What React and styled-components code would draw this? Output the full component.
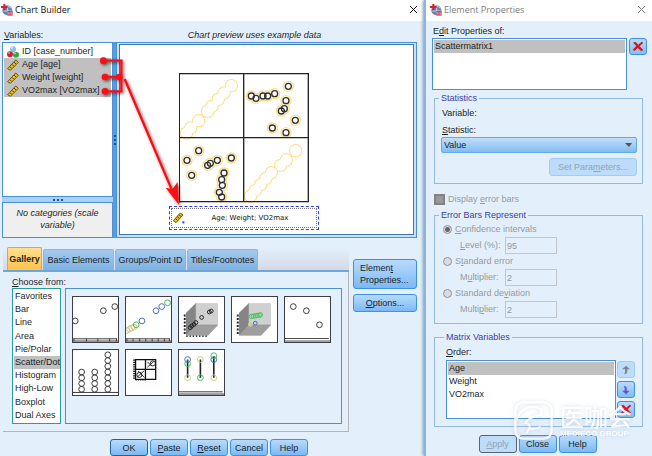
import React from "react";
import styled, { createGlobalStyle, css } from "styled-components";

const GlobalStyle = createGlobalStyle`
  *, *::before, *::after { box-sizing: border-box; }
  body {
    margin: 0;
    background: #e3effb;
    color: #1c1f26;
    font-family: "Liberation Sans", Arial, sans-serif;
    font-size: 9px;
    line-height: 13px;
  }
  button, input, select { font: inherit; color: inherit; margin: 0; }
  ul { list-style: none; margin: 0; padding: 0; }
  svg { flex: none; }
`;

const Desktop = styled.main`
  display: grid;
  grid-template-columns: minmax(0, 106fr) minmax(0, 57fr);
  min-height: 100vh;
  overflow: hidden;
`;

const Window = styled.section`
  position: relative;
  display: flex;
  flex-direction: column;
  background: #e3effb;
  ${(p) => p.$side && css`border-left: 2px solid #8db4da; box-shadow: -1px 0 3px #7d97b3;`}
`;

const TitleBar = styled.header`
  display: flex;
  align-items: center;
  gap: 2px;
  height: 21px;
  padding: 0 6px 2px ${(p) => (p.$muted ? 4 : 1)}px;
  background: #fff;
  color: ${(p) => (p.$muted ? "#7d7d7d" : "#111")};
`;

const Title = styled.h1`
  flex: 1;
  margin: 0;
  font: 400 9px/16px "Open Sans", "Noto Sans", sans-serif;
`;

const CloseButton = styled.button`
  display: flex;
  padding: 0;
  border: 0;
  background: none;
`;

const Caption = styled.div`
  height: 21px;
  padding: 8px 0 0 2px;
`;

const PreviewCaption = styled(Caption)`
  padding-right: 26px;
  text-align: center;
  font-style: italic;
`;

const Workspace = styled.div`
  display: grid;
  grid-template-columns: 111px 3px minmax(0, 1fr);
  grid-template-rows: auto 196px;
  padding: 0 7px 0 2px;
`;

const SideStack = styled.div`
  display: flex;
  flex-direction: column;
`;

const ListBox = styled.ul`
  flex: 1;
  padding: ${(p) => p.$pad || "1px"};
  border: 1px solid ${(p) => p.$edge || "#4a90d9"};
  background: #fff;
`;

const ListItem = styled.li`
  display: flex;
  align-items: center;
  gap: 3px;
  height: 13px;
  padding-left: ${(p) => p.$inset || 1}px;
  white-space: nowrap;
  background: ${(p) => (p.$selected ? "#c0c0c0" : "transparent")};
`;

const VariableList = styled(ListBox)`
  padding-top: 2px;
`;

const Splitter = styled.div`
  display: flex;
  align-items: center;
  justify-content: center;
  background: ${(p) => (p.$vertical ? "#5f9bd8" : "#a9d0f5")};
  ${(p) => (p.$vertical ? css`grid-row: 2; grid-column: 2;` : css`height: 5px;`)}
  &::after {
    content: "";
    width: ${(p) => (p.$vertical ? 2 : 10)}px;
    height: ${(p) => (p.$vertical ? 10 : 2)}px;
    background: repeating-linear-gradient(
      ${(p) => (p.$vertical ? "180deg" : "90deg")}, #24518c 0 2px, transparent 2px 4px);
  }
`;

const Categories = styled.div`
  height: 36px;
  padding: 4px 8px;
  border: 1px solid #4a90d9;
  background: #efefef;
  text-align: center;
  font-style: italic;
  line-height: 12px;
`;

const Preview = styled.div`
  border: 1px solid #4a90d9;
  padding: 1px 2px 2px;
  background: #c9e2fa;
`;

const Canvas = styled.div`
  display: flex;
  flex-direction: column;
  align-items: center;
  height: 100%;
  padding: 28px 46px 0 0;
  border: 1px solid #3b76b4;
  background: #fff;
`;

const DropZone = styled.div`
  display: flex;
  align-items: center;
  width: 150px;
  height: 24px;
  margin-top: 3px;
  padding: 1px;
  border: 1px dashed #3338ff;
`;

const DropInner = styled.div`
  flex: 1;
  display: flex;
  align-items: center;
  height: 100%;
  padding: 0 0 0 1px;
  border: 1px dotted #777;
  font: 7px/12px "DejaVu Sans", Verdana, sans-serif;
  color: #111;
  span { flex: 1; text-align: center; white-space: nowrap; }
`;

const Annotation = styled.svg`
  position: absolute;
  left: 0;
  top: 0;
  pointer-events: none;
`;

const LowerArea = styled.div`
  display: grid;
  grid-template-columns: minmax(0, 1fr) 64px;
  gap: 4px;
  padding: 10px 7px 0 3px;
`;

const TabList = styled.div`
  display: flex;
  align-items: flex-end;
  gap: 1px;
  height: 24px;
  padding-left: 4px;
  border-bottom: 2px solid #6ea6da;
  background: linear-gradient(#e3effb, #d5d9e6);
`;

const Tab = styled.button`
  flex: none;
  height: ${(p) => (p.$active ? 23 : 21)}px;
  width: ${(p) => (p.$active ? 35 : 71)}px;
  padding: 0;
  border: 1px solid ${(p) => (p.$active ? "#e0a63c" : "#8db7e0")};
  border-bottom: 0;
  border-radius: 2px 2px 0 0;
  background: ${(p) => (p.$active ? "linear-gradient(#ffe08d, #ffc24d)" : "linear-gradient(#a4caef, #7fb0df)")};
  font-weight: ${(p) => (p.$active ? 700 : 400)};
  white-space: nowrap;
`;

const TabPanel = styled.div`
  padding: 4px 6px 7px 9px;
  border-right: 1px solid #b4b4bb;
  border-bottom: 1px solid #b4b4bb;
`;

const PanelLabel = styled.div`
  height: 12px;
`;

const Chooser = styled.div`
  display: grid;
  grid-template-columns: 49px minmax(0, 1fr);
  gap: 4px;
  height: 136px;
`;

const TypeList = styled(ListBox)`
  display: grid;
  grid-auto-rows: 1fr;
  ${ListItem} { height: auto; }
`;

const Thumbs = styled.div`
  display: flex;
  flex-wrap: wrap;
  align-content: flex-start;
  gap: 6px;
  padding: 7px 6px;
  border: 1px solid #4a90d9;
`;

const Thumb = styled.button`
  display: flex;
  width: 47px;
  height: 47px;
  padding: 0;
  border: 1px solid #3c3f48;
  background: #fff;
  svg { width: 100%; height: 100%; }
`;

const Actions = styled.div`
  display: flex;
  flex-direction: column;
  gap: 5px;
  padding-top: 11px;
`;

const Button = styled.button`
  min-width: ${(p) => p.$width || 38}px;
  height: ${(p) => p.$height || 17}px;
  padding: ${(p) => (p.$left ? "0 6px" : "0")};
  border: 1px solid ${(p) => (p.$default ? "#2a5f96" : "#3d91e6")};
  border-radius: 3px;
  background: linear-gradient(#b9dafa, #9acbfa 50%, #7bb8f4);
  line-height: 12px;
  text-align: ${(p) => (p.$left ? "left" : "center")};
  white-space: nowrap;
  &:disabled {
    border-color: ${(p) => (p.$default ? "#53657a" : "#a1cdf5")};
    background: #bddcf9;
    color: #93a3b5;
  }
`;

const ButtonRow = styled.footer`
  display: flex;
  justify-content: center;
  gap: 2px;
  padding: ${(p) => p.$pad};
`;

const IconButton = styled.button`
  display: flex;
  align-items: center;
  justify-content: center;
  width: 18px;
  height: 17px;
  padding: 0;
  border: 1px solid #3d91e6;
  border-radius: 3px;
  background: linear-gradient(#b9dafa, #83bdf6);
  &:disabled { border-color: #a1cdf5; background: #bddcf9; }
`;

const SideBody = styled.div`
  display: flex;
  flex-direction: column;
  padding: 4px 9px 0 6px;
`;

const ListRow = styled.div`
  display: flex;
  gap: ${(p) => p.$gap}px;
  height: ${(p) => p.$height}px;
  margin-right: ${(p) => p.$pull || 0}px;
`;

const Group = styled.fieldset`
  min-width: 0;
  height: ${(p) => p.$height}px;
  margin: ${(p) => p.$gap}px 0 0 2px;
  padding: ${(p) => p.$pad || "0 5px 0 6px"};
  border: 1px solid #93bbe0;
`;

const Legend = styled.legend`
  height: 13px;
  margin-left: -2px;
  padding: 0 2px;
  color: #4040a8;
`;

const FieldLabel = styled.label`
  display: block;
  padding: ${(p) => p.$pad || "0 1px"};
`;

const SelectWrap = styled.div`
  display: grid;
  align-items: center;
  > * { grid-area: 1 / 1; }
  svg { justify-self: end; margin-right: 5px; pointer-events: none; }
`;

const Select = styled.select`
  appearance: none;
  width: 100%;
  height: 16px;
  padding: 0 2px;
  border: 1px solid #62aaf0;
  border-radius: 2px;
  background: linear-gradient(#c2dffa, #82bbf2);
  line-height: 13px;
`;

const AlignEnd = styled.div`
  display: flex;
  justify-content: flex-end;
  padding-top: 5px;
`;

const CheckLine = styled.label`
  display: flex;
  align-items: center;
  gap: 3px;
  margin: 9px 0 0 2px;
  color: #969ba1;
`;

const Checkbox = styled.input`
  appearance: none;
  width: 11px;
  height: 11px;
  border: 2px solid #828282;
  background: #999;
`;

const RadioLine = styled.label`
  display: flex;
  align-items: center;
  gap: 3px;
  height: 15px;
  padding-left: 2px;
  color: #969ba1;
`;

const Radio = styled.input`
  appearance: none;
  width: 9px;
  height: 9px;
  border: 1px solid #8f9499;
  border-radius: 50%;
  background: #d9dde1;
  &:checked { background: radial-gradient(circle, #666 0 2px, #d9dde1 3px); }
`;

const NumberLine = styled.label`
  display: grid;
  grid-template-columns: 45px 52px;
  align-items: center;
  height: 17px;
  padding-left: 19px;
  color: #969ba1;
`;

const NumberInput = styled.input`
  width: 100%;
  height: 17px;
  padding: 0 1px;
  border: 1px solid #c3c7cb;
  background: transparent;
  &:disabled { color: #969ba1; }
`;

const IconStack = styled.div`
  display: flex;
  flex-direction: column;
  gap: 3px;
  padding-top: 1px;
`;

const Watermark = styled.div`
  position: absolute;
  right: 20px;
  bottom: 16px;
  display: flex;
  align-items: center;
  gap: 7px;
  color: #fff;
  opacity: 0.85;
  filter: drop-shadow(0 0 2px rgba(110, 130, 150, 0.3));
  pointer-events: none;
`;

const Brand = styled.div`
  display: flex;
  flex-direction: column;
  strong { font: 500 24px/26px "Noto Sans CJK SC", sans-serif; }
  small { font-size: 8px; line-height: 9px; font-weight: 700; white-space: nowrap; }
`;

const AppIcon = () => (
  <svg width="12" height="14" viewBox="0 0 36 42" aria-hidden="true">
    <circle cx="19" cy="22" r="15" fill="#5785b8" />
    <path d="M8 16q10-14 23 0M20 8v28M7 24h25" fill="none" stroke="#c6dcf0" strokeWidth="3" />
    <path d="M0 12h20M10 3v19" stroke="#d91f32" strokeWidth="6" />
    <path d="M19 24h16v14H19z" fill="#cf4058" />
    <path d="M22 27v8M27 27v8M32 27v8" stroke="#f3b9c2" strokeWidth="2" />
  </svg>
);

const CloseIcon = () => (
  <svg width="9" height="9" viewBox="0 0 9 9" aria-hidden="true">
    <path d="M1 1l7 7M8 1l-7 7" stroke="currentColor" strokeWidth="1" />
  </svg>
);

const RulerIcon = () => (
  <svg width="12" height="12" viewBox="0 0 36 36" aria-hidden="true">
    <path d="M2 29L26 3l8 7L10 34z" fill="#edc21c" stroke="#6b520e" strokeWidth="3" />
    <path d="M9 23l5 5M15 16l6 6M21 9l6 6" stroke="#4a3805" strokeWidth="3" />
  </svg>
);

const NominalIcon = () => (
  <svg width="12" height="12" viewBox="0 0 36 36" aria-hidden="true">
    <circle cx="18" cy="10" r="9" fill="#8bbdec" />
    <circle cx="9" cy="25" r="9" fill="#cb2638" />
    <circle cx="27" cy="26" r="9" fill="#36a549" />
    <circle cx="6" cy="21" r="3" fill="#ea8b95" />
    <circle cx="24" cy="22" r="3" fill="#8fdc98" />
    <circle cx="15" cy="6" r="3" fill="#d9edff" />
  </svg>
);

const DroppedRulerIcon = () => (
  <svg width="12" height="12" viewBox="0 0 36 36" aria-hidden="true">
    <path d="M1 26L22 3l8 6L9 32z" fill="#edc21c" stroke="#6b520e" strokeWidth="3" />
    <path d="M8 20l5 5M13 14l6 6M18 8l6 6" stroke="#4a3805" strokeWidth="3" />
    <path d="M28 28h6v6h-6z" fill="#3338ff" />
  </svg>
);

const DeleteIcon = () => (
  <svg width="12" height="11" viewBox="0 0 36 33" aria-hidden="true">
    <path d="M3 5l7-3 9 9 10-9 5 3-11 11 11 11-6 4-11-10-9 9-6-4 11-11z" fill="#d8171f" />
  </svg>
);

const ArrowIcon = ({ down }) => (
  <svg width="10" height="10" viewBox="0 0 30 30" aria-hidden="true">
    {down ? (
      <path d="M9 2q8 1 8 8v7h9L15 28 3 17h8v-7z" fill="#5d55d4" />
    ) : (
      <path d="M15 2l12 11h-8v6q0 8-9 9l2-7v-8H3z" fill="#7d8791" />
    )}
  </svg>
);

const diagonalA = [[50, 219], [62, 204], [86, 182], [113, 154], [126, 139], [145, 118], [162, 99], [184, 77]];
const diagonalB = [[242, 408], [256, 391], [272, 374], [288, 355], [304, 338], [332, 316], [349, 300], [377, 272]];
const upper = [[244, 108], [258, 115], [279, 108], [293, 108], [314, 101], [355, 79], [348, 122], [343, 146], [334, 153], [376, 181], [307, 204], [348, 218]];
const lower = [[86, 272], [51, 301], [65, 346], [142, 301], [121, 310], [113, 316], [184, 294], [162, 339], [155, 359], [157, 376], [148, 397], [155, 411]];

const Dots = ({ points, r, ...rest }) =>
  points.map(([x, y], i) => <circle key={i} cx={x} cy={y} r={r} {...rest} />);

const MatrixChart = () => (
  <svg width="130" height="130" viewBox="27 39 390 390" role="img" aria-label="Scatterplot matrix">
    {[diagonalA, diagonalB].map((d, i) => (
      <g key={i}>
        <Dots points={d} r={20} fill="#ffdd85" />
        <Dots points={d} r={17} fill="#fff" />
      </g>
    ))}
    {[upper, lower].map((d, i) => (
      <g key={i}>
        <Dots points={d} r={17} fill="#ffdd85" />
        <Dots points={d} r={13} fill="#fff" />
        <Dots points={d} r={9} fill="none" stroke="#303030" strokeWidth="4" />
      </g>
    ))}
    <path d="M28 41h387v384H28zM221 41v384M28 233h387" fill="none" stroke="#222" strokeWidth="4" />
  </svg>
);

const ring = { r: 9, fill: "none", strokeWidth: 3 };
const blue = "#4961c4";
const green = "#35bd4b";
const tan = "#cdc68d";

const SimpleScatter = () => (
  <svg viewBox="0 0 141 141">
    <Dots points={[[7, 75], [95, 43], [131, 30]]} stroke="#333" {...ring} />
    <path d="M0 131h138M3 131v8M42 131v8M78 131v8M115 131v8M136 131v8M0 138h141" stroke="#333" strokeWidth="3" />
  </svg>
);

const GroupedScatter = () => (
  <svg viewBox="0 0 141 141">
    <Dots points={[[3, 105], [11, 101], [18, 97], [25, 94]]} stroke={tan} {...ring} />
    <Dots points={[[32, 87], [130, 18]]} stroke={green} {...ring} />
    <Dots points={[[50, 75], [94, 43], [112, 30]]} stroke={blue} {...ring} />
    <path d="M0 131h138M3 131v8M22 131v8M43 131v8M62 131v8M82 131v8M101 131v8M120 131v8M136 131v8M0 138h141" stroke="#333" strokeWidth="3" />
  </svg>
);

const Cube = ({ children, ticks }) => (
  <svg viewBox="0 0 141 141">
    <path d="M22 50L52 20h69v70l-30 31H22z" fill="#b9b9b9" />
    <path d="M22 50L52 20v70L22 121z" fill="#858585" />
    <path d="M22 121L52 88h69l-30 33z" fill="#9e9e9e" />
    <path d="M52 20h69v68H52z" fill="#d0d0d0" />
    <path d="M52 20v68h69" fill="none" stroke="#888" strokeWidth="2" />
    <path d="M18 55v64" stroke="#222" strokeWidth="6" strokeDasharray="6 5" />
    {ticks && <path d="M23 123h68" stroke="#222" strokeWidth="5" strokeDasharray="4 6" />}
    {children}
  </svg>
);

const Cube3D = () => (
  <Cube ticks>
    <Dots points={[[35, 96], [40, 91], [47, 86], [53, 80], [71, 64], [95, 47], [101, 44]]} r={6} fill="none" stroke="#222" strokeWidth="3" />
  </Cube>
);

const GroupedCube3D = () => (
  <Cube>
    <Dots points={[[61, 61], [67, 60], [73, 59], [79, 58], [85, 57], [89, 56]]} r={7} fill="none" stroke="#46c960" strokeWidth="3" />
    <circle cx="57" cy="86" r="7" fill="#d3cd9a" />
    <circle cx="73" cy="82" r="6" fill="none" stroke={blue} strokeWidth="3" />
  </Cube>
);

const SummaryPoint = () => (
  <svg viewBox="0 0 141 141">
    <Dots points={[[26, 30], [67, 43], [108, 87]]} stroke="#333" {...ring} />
    <path d="M0 130h137M0 138h141" stroke="#444" strokeWidth="3" />
  </svg>
);

const column = (x, n) => Array.from({ length: n }, (_, i) => [x, 123 - i * 18]);

const DotPlot = () => (
  <svg viewBox="0 0 141 141">
    <Dots points={[...column(27, 4), ...column(68, 4), ...column(109, 7)]} stroke="#333" {...ring} />
    <path d="M0 133h141" stroke="#333" strokeWidth="3" />
  </svg>
);

const MatrixThumb = () => (
  <svg viewBox="0 0 141 141">
    <path d="M30 30h63v62H30zM61 30v62M30 61h63" fill="none" stroke="#111" strokeWidth="4" />
    <path d="M26 30v62" stroke="#111" strokeWidth="7" strokeDasharray="4 3" />
    <path d="M30 93h32" stroke="#111" strokeWidth="5" strokeDasharray="4 3" />
    <path d="M35 85L57 65M38 66l20 20M67 54l20-18M67 37l13 13" stroke="#222" strokeWidth="3" />
    <Dots points={[[84, 42], [42, 78]]} r={8} fill="none" stroke="#222" strokeWidth="3" />
  </svg>
);

const DropLine = () => (
  <svg viewBox="0 0 141 141">
    <path d="M27 30v57M67 30v57M109 20v67" stroke="#222" strokeWidth="5" />
    <Dots points={[[27, 30], [109, 30]]} stroke={blue} {...ring} />
    <Dots points={[[27, 43], [67, 87], [109, 18]]} stroke={green} {...ring} />
    <Dots points={[[67, 30], [27, 87], [109, 87]]} stroke={tan} {...ring} />
    <path d="M0 131h137M0 138h141" stroke="#333" strokeWidth="3" />
  </svg>
);

const variables = ["Age [age]", "Weight [weight]", "VO2max [VO2max]"];
const chartTypes = ["Favorites", "Bar", "Line", "Area", "Pie/Polar", "Scatter/Dot", "Histogram", "High-Low", "Boxplot", "Dual Axes"];
const thumbnails = [
  ["Simple Scatter", SimpleScatter],
  ["Grouped Scatter", GroupedScatter],
  ["Simple 3-D Scatter", Cube3D],
  ["Grouped 3-D Scatter", GroupedCube3D],
  ["Summary Point Plot", SummaryPoint],
  ["Simple Dot Plot", DotPlot],
  ["Scatterplot Matrix", MatrixThumb],
  ["Drop-Line", DropLine],
];

const DragArrow = () => (
  <Annotation width="220" height="234" viewBox="0 0 660 702" aria-hidden="true">
    <defs>
      <filter id="arrow-shadow" x="-20%" y="-20%" width="140%" height="140%">
        <feDropShadow dx="4" dy="4" stdDeviation="4" floodColor="#000" floodOpacity="0.6" />
      </filter>
    </defs>
    <g filter="url(#arrow-shadow)" stroke="#fb0b12" strokeWidth="7" fill="none">
      <path d="M310 182h54v92h-49M315 231h43M374 237L520 580" />
      <path d="M537 615l-40-52 20 5 16-22z" fill="#fb0b12" stroke="none" />
      <Dots points={[[310, 182], [315, 231], [315, 274], [358, 231]]} r={10} fill="#fb0b12" stroke="none" />
    </g>
  </Annotation>
);

function ChartBuilder() {
  return (
    <Window aria-label="Chart Builder">
      <TitleBar>
        <AppIcon />
        <Title>Chart Builder</Title>
        <CloseButton aria-label="Close Chart Builder"><CloseIcon /></CloseButton>
      </TitleBar>
      <Workspace>
        <Caption id="variables"><u>V</u>ariables:</Caption>
        <span />
        <PreviewCaption>Chart preview uses example data</PreviewCaption>
        <SideStack>
          <VariableList role="listbox" aria-labelledby="variables">
            <ListItem role="option" aria-selected="false" $inset={3}><NominalIcon />ID [case_number]</ListItem>
            {variables.map((v) => (
              <ListItem key={v} role="option" aria-selected="true" $selected $inset={3}><RulerIcon />{v}</ListItem>
            ))}
          </VariableList>
          <Splitter />
          <Categories>No categories (scale variable)</Categories>
        </SideStack>
        <Splitter $vertical />
        <Preview>
          <Canvas>
            <MatrixChart />
            <DropZone><DropInner><DroppedRulerIcon /><span>Age; Weight; VO2max</span></DropInner></DropZone>
          </Canvas>
        </Preview>
      </Workspace>
      <LowerArea>
        <div>
          <TabList role="tablist">
            <Tab role="tab" aria-selected="true" $active>Gallery</Tab>
            <Tab role="tab" aria-selected="false">Basic Elements</Tab>
            <Tab role="tab" aria-selected="false">Groups/Point ID</Tab>
            <Tab role="tab" aria-selected="false">Titles/Footnotes</Tab>
          </TabList>
          <TabPanel role="tabpanel">
            <PanelLabel id="choose"><u>C</u>hoose from:</PanelLabel>
            <Chooser>
              <TypeList role="listbox" aria-labelledby="choose" $edge="#2b9c9c">
                {chartTypes.map((t) => (
                  <ListItem key={t} role="option" aria-selected={t === "Scatter/Dot"} $selected={t === "Scatter/Dot"}>{t}</ListItem>
                ))}
              </TypeList>
              <Thumbs>
                {thumbnails.map(([name, Drawing]) => (
                  <Thumb key={name} aria-label={name}><Drawing /></Thumb>
                ))}
              </Thumbs>
            </Chooser>
          </TabPanel>
        </div>
        <Actions>
          <Button $height={30} $left>Elemen<u>t</u><br />Properties...</Button>
          <Button $height={18}><u>O</u>ptions...</Button>
        </Actions>
      </LowerArea>
      <ButtonRow $pad="7px 6px 0 0">
        <Button $default>OK</Button>
        <Button><u>P</u>aste</Button>
        <Button><u>R</u>eset</Button>
        <Button>Cancel</Button>
        <Button>Help</Button>
      </ButtonRow>
      <DragArrow />
    </Window>
  );
}

function ElementProperties() {
  return (
    <Window $side aria-label="Element Properties">
      <TitleBar $muted>
        <AppIcon />
        <Title>Element Properties</Title>
        <CloseButton aria-label="Close Element Properties"><CloseIcon /></CloseButton>
      </TitleBar>
      <SideBody>
        <FieldLabel as="div" id="edit-of">E<u>d</u>it Properties of:</FieldLabel>
        <ListRow $gap={2} $height={52} $pull={-4}>
          <ListBox role="listbox" aria-labelledby="edit-of">
            <ListItem role="option" aria-selected="true" $selected>Scattermatrix1</ListItem>
          </ListBox>
          <IconButton aria-label="Remove element"><DeleteIcon /></IconButton>
        </ListRow>
        <Group $height={92} $gap={2}>
          <Legend>Statistics</Legend>
          <FieldLabel as="div" $pad="2px 1px 4px">Variable:</FieldLabel>
          <FieldLabel htmlFor="statistic"><u>S</u>tatistic:</FieldLabel>
          <SelectWrap>
            <Select id="statistic" defaultValue="Value"><option>Value</option></Select>
            <svg width="7" height="4" viewBox="0 0 7 4" aria-hidden="true"><path d="M0 0h7L4 4z" fill="#555" /></svg>
          </SelectWrap>
          <AlignEnd><Button disabled $width={88} $height={18}>Set Para<u>m</u>eters...</Button></AlignEnd>
        </Group>
        <CheckLine><Checkbox type="checkbox" disabled /><span>Display <u>e</u>rror bars</span></CheckLine>
        <Group $height={115} $gap={3}>
          <Legend>Error Bars Represent</Legend>
          <RadioLine><Radio type="radio" name="bars" defaultChecked disabled /><span><u>C</u>onfidence intervals</span></RadioLine>
          <NumberLine><span><u>L</u>evel (%):</span><NumberInput defaultValue="95" disabled /></NumberLine>
          <RadioLine><Radio type="radio" name="bars" disabled /><span>S<u>t</u>andard error</span></RadioLine>
          <NumberLine><span>M<u>u</u>ltiplier:</span><NumberInput defaultValue="2" disabled /></NumberLine>
          <RadioLine><Radio type="radio" name="bars" disabled /><span>Standard de<u>v</u>iation</span></RadioLine>
          <NumberLine><span>Multi<u>p</u>lier:</span><NumberInput defaultValue="2" disabled /></NumberLine>
        </Group>
        <Group $height={96} $gap={7} $pad="0 7px 0 11px">
          <Legend>Matrix Variables</Legend>
          <FieldLabel as="div" id="order" $pad="2px 0 1px"><u>O</u>rder:</FieldLabel>
          <ListRow $gap={1} $height={59}>
            <ListBox role="listbox" aria-labelledby="order">
              <ListItem role="option" aria-selected="true" $selected>Age</ListItem>
              <ListItem role="option" aria-selected="false">Weight</ListItem>
              <ListItem role="option" aria-selected="false">VO2max</ListItem>
            </ListBox>
            <IconStack>
              <IconButton disabled aria-label="Move up"><ArrowIcon /></IconButton>
              <IconButton aria-label="Move down"><ArrowIcon down /></IconButton>
              <IconButton aria-label="Remove variable"><DeleteIcon /></IconButton>
            </IconStack>
          </ListRow>
        </Group>
        <ButtonRow $pad="8px 0 0">
          <Button $height={18} $default disabled><u>A</u>pply</Button>
          <Button $height={18}>Close</Button>
          <Button $height={18}>Help</Button>
        </ButtonRow>
      </SideBody>
      <Watermark>
        <svg width="39" height="39" viewBox="0 0 117 117" aria-hidden="true">
          <rect x="4" y="4" width="109" height="109" rx="24" fill="none" stroke="#fff" strokeWidth="7" />
          <path d="M8 58C14 30 40 14 66 18c18 3 22 18 10 25-20 4-36 14-42 23 14 2 14 10 12 16 14 4 24 2 32-4M46 82l-8 14" fill="none" stroke="#fff" strokeWidth="6" strokeLinecap="round" />
        </svg>
        <Brand><strong lang="zh">医咖会</strong><small>MEDIECO GROUP</small></Brand>
      </Watermark>
    </Window>
  );
}

export default function App() {
  return (
    <>
      <GlobalStyle />
      <Desktop>
        <ChartBuilder />
        <ElementProperties />
      </Desktop>
    </>
  );
}
